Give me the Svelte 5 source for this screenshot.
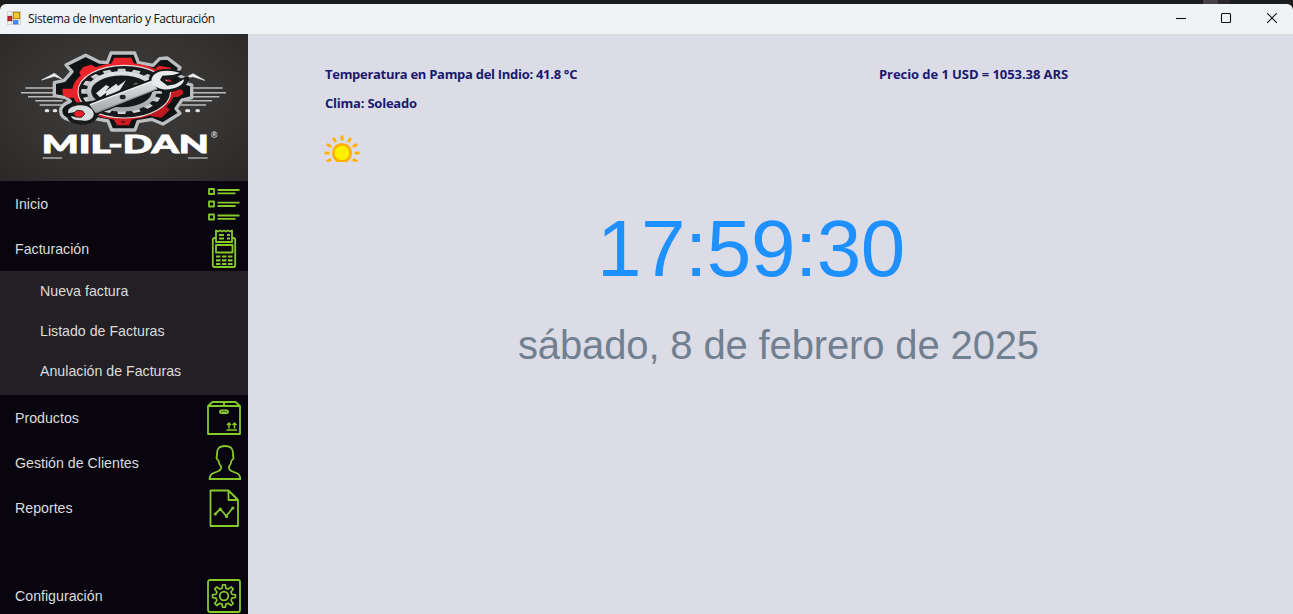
<script>
  const secondary = ['Nueva factura', 'Listado de Facturas', 'Anulación de Facturas'];
  const rays = [0, 30, 60, 90, 120, 150, 180, 210, 240, 270, 300, 330];
  const cogs = [0, 22.5, 45, 67.5, 90, 112.5, 135, 157.5, 180, 202.5, 225, 247.5, 270, 292.5, 315, 337.5];
</script>

<div class="window">
  <header>
    <svg class="app-icon" width="14" height="14" viewBox="0 0 42 42">
      <path d="M1 1h40v40H1z" fill="#f4f5f5" stroke="#b9bdc0" stroke-width="2" />
      <path d="M1 13h18M14 1v40M14 29h27" stroke="#c5c8ca" stroke-width="2" />
      <rect x="19" y="4" width="19" height="19" fill="#f5c52d" stroke="#a67b10" stroke-width="3" />
      <rect x="3" y="17" width="11" height="12" fill="#d9302b" stroke="#8d1917" stroke-width="3" />
      <rect x="19" y="29" width="14" height="10" fill="#4d8ef0" stroke="#3268bd" stroke-width="2" />
    </svg>
    <h1>Sistema de Inventario y Facturación</h1>
    <div class="controls">
      <svg width="12" height="12" viewBox="0 0 12 12"><path d="M1 6.5h10" /></svg>
      <svg width="12" height="12" viewBox="0 0 12 12"><rect x="1.5" y="1.5" width="9" height="9" rx="1" /></svg>
      <svg width="12" height="12" viewBox="0 0 12 12"><path d="M1.2 1.2l9.6 9.6M10.8 1.2l-9.6 9.6" /></svg>
    </div>
  </header>
  <div class="body">
    <nav>
      <div class="logo">
        <svg width="248" height="147" viewBox="0 0 744 441">
          <defs>
            <linearGradient id="steel" x1="0" y1="0" x2="0" y2="1">
              <stop offset="0" stop-color="#dfe1e2" /><stop offset="1" stop-color="#a4a7a8" />
            </linearGradient>
            <linearGradient id="red" x1="0" y1="0" x2="1" y2="1">
              <stop offset="0" stop-color="#f6252c" /><stop offset=".6" stop-color="#dc2026" /><stop offset="1" stop-color="#a81218" />
            </linearGradient>
          </defs>
          <path d="M76 162h90M63 176h97M84 188h82M106 200h82M119 213h80M580 162h88M579 176h99M570 188h88M553 200h83M541 213h77" stroke="#b9bcbe" stroke-width="4.500" />
          <path d="M125 138l38-20 23 17-23-8zM614 139l-35-20-26 13 26-4z" fill="#eceeee" stroke="#eceeee" stroke-width="2" />
          <g fill="#e4e5e5"><ellipse cx="141" cy="230" rx="7" ry="5" /><ellipse cx="165" cy="230" rx="7" ry="5" /><ellipse cx="563" cy="230" rx="8" ry="5" /><ellipse cx="593" cy="230" rx="7" ry="5" /></g>
          <path d="M322 86l11-29h71l11 29 44 8 20-20 23-2 38 29-11 20 29 14 3 14 14 4v38l-29 7-18 26 12 14-51 32-34-14-41 7-9 25h-70l-11-27-54-10c-34 19-88 10-88-20 0-15 12-23 29-29l-13-11-35-6v-39l30-7 23-26-18-20 59-29 41 20z" fill="#101314" stroke="#bbbfc1" stroke-width="10" stroke-linejoin="round" />
          <g fill="url(#red)">
            <path d="M333 91l10-20h50l10 20zM238 115l12-16 24-7 28 17-37 28-18-2zM467 103l9-8 37 6-6 13 5 16-20 7zM188 164h40v27h-27l-13-10zM508 166h34l7 5v9l-16 9h-29zM338 250h60l-11 24h-36zM440 235l52-22 18 14-26 24-29-4z" />
            <ellipse cx="370" cy="172" rx="153" ry="86" />
          </g>
          <ellipse cx="373" cy="173" rx="139" ry="79" fill="#17191a" stroke="#e6dedf" stroke-width="3.500" />
          <g fill="url(#steel)">
            {#each cogs as angle}
              <g transform="translate(365 172) scale(1 .56)"><path d="M-11 -121h22l3 22h-28z" transform={`rotate(${angle})`} /></g>
            {/each}
          </g>
          <ellipse cx="365" cy="172" rx="98" ry="54" fill="#15191a" stroke="url(#steel)" stroke-width="13" />
          <path d="M288 178l30-25 10 5-13 15 34-24 5 7 24-17-18 29-43 25 2-17-19 14z" fill="#e2e5e5" />
          <path d="M399 151l9-6 13 8-13 5z" fill="#62595a" />
          <path d="M267 211l185-70c-2-29 43-37 88-24l-24 13-30 2 7 13 23 6 46-18c-10 33-60 44-90 29L290 236c1 34-64 39-81 17l14-9-16-17c8-18 39-19 60-16z" fill="#17191a" stroke="#17191a" stroke-width="12" stroke-linejoin="round" />
          <path d="M268 212l187-71 17 24-185 72z" fill="url(#steel)" />
          <path d="M270 212l185-70" stroke="#eef1f1" stroke-width="4" />
          <path d="M290 235l180-70" stroke="#8e9293" stroke-width="4" />
          <ellipse cx="368" cy="189" rx="9" ry="7" fill="#202426" />
          <path d="M454 140c2-30 46-36 86-23l-22 6-31 2-7 13 22 17 24-4 26-15c2 24-53 39-78 25-12-5-20-11-20-21z" fill="#e7eaeb" />
          <path d="M205 228c12-17 53-19 68-4 21 20-1 42-32 35-17 0-26-5-28-13l16 4-7-15-18 3z" fill="#d9dcdc" />
          <path d="M221 237l11-8 16 2 6 9-9 10-19-1z" fill="#ed1e29" stroke="#332527" stroke-width="3" />
          <ellipse cx="369" cy="263" rx="6" ry="3" fill="#561317" />
          <text class="wordmark" x="125" y="356" textLength="502" lengthAdjust="spacingAndGlyphs">MIL-DAN</text>
          <text class="registered" x="633" y="312">®</text>
          <path d="M128 372h58M564 372h59" stroke="#e2e2e2" stroke-width="3" />
        </svg>
      </div>
      <div class="item">
        <span>Inicio</span>
        <svg class="list" width="34" height="38" viewBox="0 0 34 38"><path d="M2 4h5v5H2zM2 16.500h5v5H2zM2 29.500h5v5H2zM10.500 5h22M10.500 8.300h18M10.500 17.700h22M10.500 21h18M10.500 30.500h22M10.500 33.800h18" /></svg>
      </div>
      <div class="item">
        <span>Facturación</span>
        <svg width="34" height="40" viewBox="0 0 34 40"><path d="M9 9H7.500q-1.700 0-1.700 1.700V36q0 2 1.700 2h19q1.700 0 1.700-2V10.700Q28.200 9 26.500 9H25M9 13V1.500l2 1 2-1 2 1 2-1 2 1 2-1 2 1 2-1V13zM9 16h16.500v7.500H9zM12 6h5M20 6h3M12 9.500h5M20 9.500h3" /><path d="M9 27.500h4.500M15 27.500h4.500M21 27.500h4.500M9 31.300h4.500M15 31.300h4.500M21 31.300h4.500M9 35h4.500M15 35h4.500M21 35h4.500" stroke-width="2.200" /></svg>
      </div>
      <div class="submenu">
        {#each secondary as label}
          <div>{label}</div>
        {/each}
      </div>
      <div class="item">
        <span>Productos</span>
        <svg width="34" height="36" viewBox="0 0 34 36"><path d="M1 6h32v28H1zM1 6l4.500-4h23L33 6M17 2v4.500" /><rect x="13" y="10.500" width="8" height="2.500" rx="1" /><path d="M19.500 30h10.500M22 28.500v-6M20 25l2-2 2 2M27.500 28.500v-6M25.500 25l2-2 2 2" stroke-width="1.500" /></svg>
      </div>
      <div class="item">
        <span>Gestión de Clientes</span>
        <svg width="34" height="38" viewBox="0 0 34 38"><path d="M2.500 35q.5-4 3-5.500l5-2q3-1 3.500-3v-2q-2-2-2.500-6-1.500-.5-2-2.500l.5-3C9.500 5 12 2 18 2s8.500 3 8 9l.5 3q-.5 2-2 2.500-.5 4-2.500 6v2q.5 2 3.500 3l5 2q2.500 1.500 3 5.500z" /></svg>
      </div>
      <div class="item">
        <span>Reportes</span>
        <svg width="34" height="38" viewBox="0 0 34 38"><path d="M3.500 1.500h18l9.500 9.500v26H3.500zM21.500 1.500V11H31M8.300 25l5-5 6 7 6.500-8" /><g class="dots"><circle cx="8.300" cy="25" r="1.600" /><circle cx="13.300" cy="20" r="1.600" /><circle cx="19.500" cy="27.500" r="1.600" /><circle cx="25.800" cy="19" r="1.600" /></g></svg>
      </div>
      <div class="item settings">
        <span>Configuración</span>
        <svg width="34" height="36" viewBox="0 0 34 36"><rect x="1" y="2" width="32" height="32" rx="2" /><path transform="translate(2 1.500) scale(.88)" stroke-width="1.900" d="M15.500 6h3l.7 4 2.500 1 3.600-2.500 2.200 2.200-2.500 3.600 1 2.500 4 .7v3l-4 .7-1 2.500 2.500 3.600-2.200 2.200-3.600-2.500-2.500 1-.7 3.500h-3l-.7-3.500-2.500-1-3.600 2.500-2.200-2.200L9 23.700l-1-2.500-4-.7v-3l4-.7 1-2.500-2.500-3.600 2.200-2.200 3.600 2.500 2.500-1z" /><circle cx="17" cy="18" r="4.300" /></svg>
      </div>
    </nav>
    <main>
      <section class="facts">
        <div class="weather">
          <p class="temp">Temperatura en Pampa del Indio: 41.8 °C</p>
          <p class="sky">Clima: Soleado</p>
          <svg width="38" height="27" viewBox="0 0 38 27">
            <circle cx="18" cy="18" r="8.700" fill="#fff000" stroke="#ffb000" stroke-width="2.800" />
            {#each rays as angle}<path d="M18 .5v4.900" stroke="#ffb000" stroke-width="2.800" transform={`rotate(${angle} 18 18)`} />{/each}
          </svg>
        </div>
        <p class="rate">Precio de 1 USD = 1053.38 ARS</p>
      </section>
      <time class="clock">17:59:30</time>
      <p class="date">sábado, 8 de febrero de 2025</p>
    </main>
  </div>
</div>

<style>
  :global(body) { margin: 0; background: #1d1b1c; }
  .window { width: 1293px; height: 614px; box-sizing: border-box; padding-top: 4px; overflow: hidden; background: linear-gradient(90deg, #1d1c1c 1203px, #454243 1203px, #454243 1218px, #292728 1218px, #292728 1230px, #1d1c1c 1230px); font-family: "Liberation Sans", Arial, sans-serif; }
  header { height: 30px; box-sizing: border-box; background: #eff3f6; border-radius: 6px 6px 0 0; display: flex; align-items: center; padding: 0 15px 0 7px; }
  h1 { font: 12px/20px "Open Sans", sans-serif; color: #111; margin: 0 0 0 7px; letter-spacing: -.34px; }
  .app-icon { margin-top: -2px; }
  .controls { display: flex; margin-left: auto; margin-top: -2px; fill: none; stroke: #111; stroke-width: 1.100; }
  .controls svg { margin-left: 34px; }
  .controls svg:nth-child(2) { margin-left: 33px; }
  .body { height: 580px; display: flex; }
  nav { width: 248px; background: #08050f; color: #dcdcdc; flex: none; }
  .logo { height: 147px; background: radial-gradient(ellipse at 50% 45%, #413f3e, #343231 65%, #292827); }
  .logo svg { display: block; }
  .wordmark { font: 900 72px Lato, sans-serif; fill: #fff; stroke: #fff; stroke-width: 2.500; }
  .registered { font: bold 26px "Liberation Sans", sans-serif; fill: #ddd; }
  .item { height: 45px; display: flex; justify-content: space-between; align-items: center; padding: 0 7px 0 15px; box-sizing: border-box; font-size: 14.200px; }
  .item span { padding-top: 1px; }
  .item svg { fill: none; stroke: #86c928; stroke-width: 1.800; stroke-linejoin: round; flex: none; }
  .item .dots { fill: #86c928; stroke: none; }
  .submenu { height: 124px; background: #232025; font-size: 14.200px; }
  .submenu div { height: 40px; line-height: 41px; padding-left: 40px; }
  .settings { margin-top: 43px; }
  main { flex: 1; background: #dcdce6; display: flex; flex-direction: column; }
  .facts { height: 166px; display: flex; box-sizing: border-box; padding: 30px 0 0 77px; color: #191970; }
  .weather { width: 554px; }
  .facts p { font: bold 13px/20px "Open Sans", sans-serif; margin: 0; white-space: nowrap; }
  .facts .temp { letter-spacing: -.29px; }
  .facts .sky { margin-top: 9px; letter-spacing: -.22px; }
  .weather svg { display: block; margin: 22px 0 0 -1px; }
  .facts .rate { letter-spacing: -.07px; }
  .clock { padding-left: 349px; color: #1e90ff; font-size: 80px; line-height: 98px; letter-spacing: -.45px; }
  .date { margin: 23px 0 0 270px; color: #708090; font-size: 40px; line-height: 48px; white-space: nowrap; letter-spacing: -.14px; }
</style>
